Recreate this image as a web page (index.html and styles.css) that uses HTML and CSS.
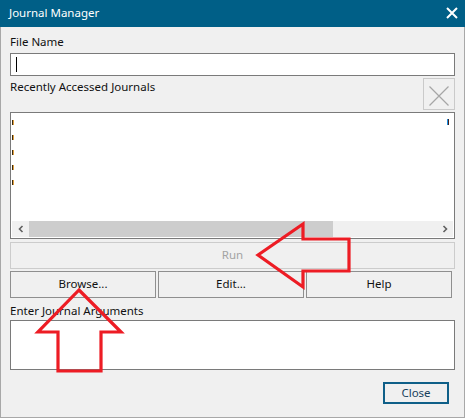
FILE: index.html
```html
<!DOCTYPE html>
<html>
<head>
<meta charset="utf-8">
<link rel="stylesheet" href="styles.css">
</head>
<body>
<div class="stage">
  <div class="titlebar">
    <span class="title">Journal Manager</span>
    <svg class="tclose" width="12" height="12" viewBox="0 0 12 12"><path d="M1 1 L11 11 M11 1 L1 11" stroke="#fff" stroke-width="2" fill="none"/></svg>
  </div>
  <div class="window">
    <div class="label first">File Name</div>
    <div class="input"><span class="caret"></span></div>
    <div class="row">
      <div class="label">Recently Accessed Journals</div>
      <div class="xbtn">
        <svg width="32" height="32" viewBox="0 0 32 32"><path d="M6.5 8.5 L25.5 27.5 M25.5 8.5 L6.5 27.5" stroke="#a6a6a6" stroke-width="1.2" fill="none"/></svg>
      </div>
    </div>
    <div class="list">
      <div class="items">
        <span class="mark"></span>
        <span class="mark"></span>
        <span class="mark"></span>
        <span class="mark"></span>
        <span class="mark"></span>
      </div>
      <span class="bluemark"></span>
      <div class="hscroll">
        <div class="arrow">
          <svg width="8" height="8" viewBox="0 0 8 8"><path d="M5.5 1 L2.5 4 L5.5 7" stroke="#606060" stroke-width="1.6" fill="none"/></svg>
        </div>
        <div class="track"><div class="thumb"></div></div>
        <div class="arrow">
          <svg width="8" height="8" viewBox="0 0 8 8"><path d="M2.5 1 L5.5 4 L2.5 7" stroke="#606060" stroke-width="1.6" fill="none"/></svg>
        </div>
      </div>
    </div>
    <div class="btn run">Run</div>
    <div class="btnrow">
      <div class="btn">Browse...</div>
      <div class="btn">Edit...</div>
      <div class="btn">Help</div>
    </div>
    <div class="label args-label">Enter Journal Arguments</div>
    <div class="args"></div>
    <div class="footer">
      <div class="btn close">Close</div>
    </div>
  </div>
  <svg class="overlay" width="465" height="418" viewBox="0 0 465 418">
    <polygon points="258,255 303,224 303,239 349,239 349,271 303,271 303,287" fill="none" stroke="#ed1c24" stroke-width="3.2" stroke-linejoin="miter"/>
    <polygon points="79,290 121,332 101,332 101,371 58,371 58,332 38,332" fill="none" stroke="#ed1c24" stroke-width="3.2" stroke-linejoin="miter"/>
  </svg>
</div>
</body>
</html>
```
FILE: styles.css
```css
* { box-sizing: border-box; }
html, body { margin: 0; padding: 0; }
body {
  width: 465px;
  height: 418px;
  background: #f0f0f0;
  font-family: "Noto Sans", "Open Sans", sans-serif;
  font-size: 11.5px;
  color: #111;
  overflow: hidden;
}
.stage {
  position: relative;
  width: 465px;
  height: 418px;
}
.titlebar {
  height: 27px;
  background: #005f87;
  display: flex;
  align-items: center;
  justify-content: space-between;
  padding: 0 7px 1px 9px;
}
.title {
  color: #fff;
  font-size: 11.5px;
  line-height: 16px;
}
.tclose { display: block; margin-top: 0; }
.window {
  height: 391px;
  border-left: 1px solid #a8a8a8;
  border-right: 1px solid #a8a8a8;
  border-bottom: 1px solid #a8a8a8;
  padding: 0 9px;
  display: flex;
  flex-direction: column;
}
.label {
  line-height: 16px;
  height: 16px;
  white-space: nowrap;
}
.label.first { margin-top: 7px; }
.input {
  margin-top: 3px;
  height: 23px;
  background: #fff;
  border: 1px solid #7a7a7a;
  padding: 3px 0 0 5px;
}
.caret {
  display: block;
  width: 1px;
  height: 15px;
  background: #000;
}
.row {
  margin-top: 2px;
  height: 32px;
  display: flex;
  justify-content: space-between;
  align-items: flex-start;
}
.row .label { margin-top: 1px; }
.xbtn {
  width: 32px;
  height: 32px;
  border: 1px solid #cacaca;
  position: relative;
  overflow: hidden;
}
.xbtn svg { position: absolute; left: -1px; top: -1px; }
.list {
  margin-top: 2px;
  height: 127px;
  background: #fff;
  border: 1px solid #7a7a7a;
  display: flex;
  flex-direction: column;
  position: relative;
}
.items {
  flex: 1;
  display: flex;
  flex-direction: column;
  gap: 10px;
  padding: 7px 0 0 1px;
}
.mark {
  display: block;
  width: 2px;
  height: 5px;
  border-left: 1px solid #3a2a10;
  border-right: 1px solid #e0a040;
}
.bluemark {
  position: absolute;
  right: 5px;
  top: 6px;
  width: 2px;
  height: 6px;
  border-left: 1px solid #1c8fe0;
  border-right: 1px solid #402020;
}
.hscroll {
  height: 16px;
  margin: 0 1px 1px 1px;
  display: flex;
  background: #f0f0f0;
}
.arrow {
  width: 17px;
  display: flex;
  align-items: center;
  justify-content: center;
}
.track { flex: 1; position: relative; }
.thumb {
  width: 304px;
  height: 100%;
  background: #cdcdcd;
}
.btn {
  border: 1px solid #8f8f8f;
  background: #f0f0f0;
  display: flex;
  align-items: center;
  justify-content: center;
  line-height: 16px;
  white-space: nowrap;
}
.run {
  margin-top: 3px;
  height: 27px;
  border-color: #cccccc;
  color: #a3a3a3;
  padding-bottom: 1px;
}
.btnrow {
  margin-top: 2px;
  display: grid;
  grid-template-columns: repeat(3, 146px);
  gap: 2px;
}
.btnrow .btn { height: 27px; padding-bottom: 1px; }
.args-label { margin-top: 5px; }
.args {
  margin-top: 1px;
  height: 50px;
  background: #fff;
  border: 1px solid #7a7a7a;
}
.footer {
  margin-top: 12px;
  display: flex;
  justify-content: flex-end;
  padding-right: 6px;
}
.close {
  width: 66px;
  height: 22px;
  border: 2px solid #0f5f88;
  color: #173f5c;
}
.overlay {
  position: absolute;
  left: 0;
  top: 0;
  pointer-events: none;
}
```
